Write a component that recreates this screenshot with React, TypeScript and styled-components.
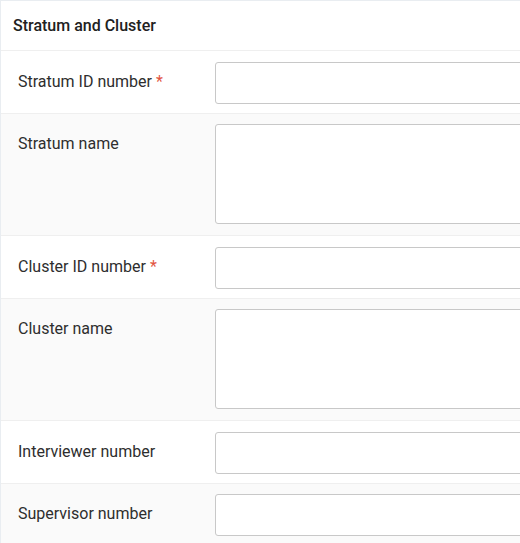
import React from "react";
import styled, { createGlobalStyle } from "styled-components";

const Global = createGlobalStyle`
  html, body { margin: 0; padding: 0; background: #fff; overflow: hidden; }
  body { font-family: Roboto, "Noto Sans", "Liberation Sans", sans-serif; }
`;

const Panel = styled.section`
  width: 760px;
  border-top: 1px solid #e9edf1;
  border-left: 1px solid #e9edf1;
  background: #fff;
`;

const Header = styled.h3`
  margin: 0;
  height: 49px;
  padding: 0 12px;
  display: flex;
  align-items: center;
  font-size: 16px;
  font-weight: 500;
  color: #212121;
`;

const Row = styled.div<{ $shaded?: boolean; $tall?: boolean }>`
  display: grid;
  grid-template-columns: 197px 1fr;
  padding: ${(p) => (p.$tall ? "10.5px 0 11px 17px" : "10.5px 0 9px 17px")};
  border-top: 1px solid #efefef;
  background: ${(p) => (p.$shaded ? "#fafafa" : "#fff")};
`;

const Label = styled.label`
  font-size: 16px;
  line-height: 20px;
  padding-top: 10px;
  color: #2e2e2e;
`;

const Req = styled.span`
  color: #e2553f;
  margin-left: 4px;
`;

const Input = styled.input`
  box-sizing: border-box;
  height: 42px;
  width: 100%;
  border: 1px solid #c8c8c8;
  border-radius: 3px;
  background: #fff;
  margin: 0;
  display: block;
`;

const TextArea = styled.textarea`
  box-sizing: border-box;
  height: 100px;
  width: 100%;
  border: 1px solid #c8c8c8;
  border-radius: 3px;
  background: #fff;
  margin: 0;
  resize: none;
  display: block;
`;

type Field = { label: string; required?: boolean; tall?: boolean };

const fields: Field[] = [
  { label: "Stratum ID number", required: true },
  { label: "Stratum name", tall: true },
  { label: "Cluster ID number", required: true },
  { label: "Cluster name", tall: true },
  { label: "Interviewer number" },
  { label: "Supervisor number" },
];

export default function App() {
  return (
    <>
      <Global />
      <Panel>
        <Header>Stratum and Cluster</Header>
        {fields.map((f, i) => (
          <Row key={f.label} $shaded={i % 2 === 1} $tall={f.tall}>
            <Label>
              {f.label}
              {f.required && <Req>*</Req>}
            </Label>
            <div>{f.tall ? <TextArea /> : <Input />}</div>
          </Row>
        ))}
      </Panel>
    </>
  );
}
